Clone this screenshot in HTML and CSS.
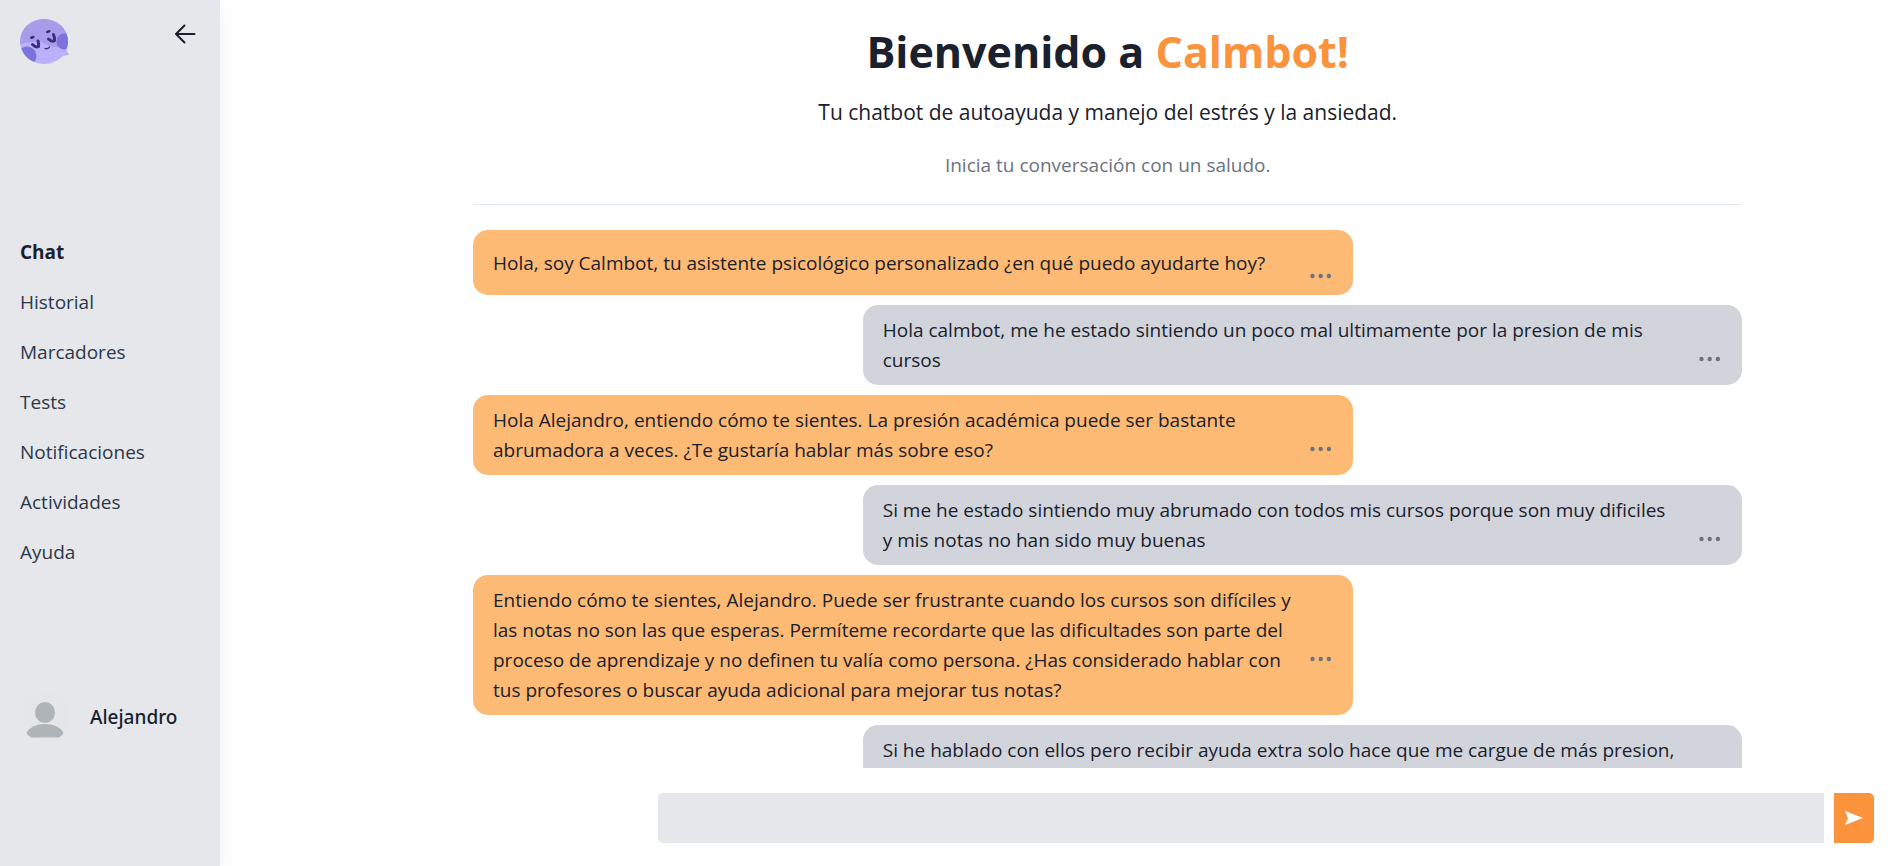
FILE: index.html
```html
<!DOCTYPE html>
<html lang="es">
<head>
<meta charset="utf-8">
<title>Calmbot</title>
<link rel="stylesheet" href="styles.css">
</head>
<body>
<svg class="sprite" aria-hidden="true">
  <symbol id="dots" viewBox="0 3 24 18">
    <circle cx="3.500" cy="12" r="2.200"/><circle cx="11.700" cy="12" r="2.200"/><circle cx="19.900" cy="12" r="2.200"/>
  </symbol>
</svg>
<aside class="sidebar">
  <div class="brand">
    <svg class="logo" viewBox="0 0 50 46" role="img" aria-label="Calmbot">
      <defs><clipPath id="face"><ellipse cx="24" cy="22.500" rx="24" ry="22.500"/></clipPath></defs>
      <path fill="#bbb0fb" d="M46 30 Q47 33.500 49.500 36 Q46 36 43 37 L36 42Z"/>
      <g clip-path="url(#face)">
        <rect width="50" height="46" fill="#bbb0fb"/>
        <path fill="#a89be8" d="M0 0H50V28L34 28Q27 27 22 23Q10 22 0 25Z"/>
        <circle cx="7" cy="37" r="9.500" fill="#7c72dc"/>
        <circle cx="44.500" cy="22.500" r="8" fill="#7c72dc"/>
      </g>
      <g fill="none" stroke="#3a2f80" stroke-linecap="round">
        <path stroke-width="3" d="M12.500 25.500Q16 29 18.500 27.500Q19 25 18 22M28.500 20Q32 23.500 34.500 21.500Q35 19 33.500 15.500"/>
        <path stroke-width="2.500" d="M11.300 18.700L13.300 18M27.300 13L29.300 12.200"/>
        <path stroke-width="1.300" d="M25 29.500Q28 30.500 29.500 28"/>
      </g>
    </svg>
    <button class="back" type="button" aria-label="Cerrar menú">
      <svg viewBox="0 0 24 24"><path d="M21.500 12H3M11.500 3.500L3 12L11.500 20.500"/></svg>
    </button>
  </div>
  <nav class="nav">
    <a class="active" href="#">Chat</a>
    <a href="#">Historial</a>
    <a href="#">Marcadores</a>
    <a href="#">Tests</a>
    <a href="#">Notificaciones</a>
    <a href="#">Actividades</a>
    <a href="#">Ayuda</a>
  </nav>
  <div class="user">
    <svg class="avatar" viewBox="0 0 50 50" aria-hidden="true">
      <circle cx="25" cy="25" r="25" fill="#e4e6e7"/>
      <ellipse cx="25" cy="20.500" rx="10" ry="10.500" fill="#aeb4b7"/>
      <path fill="#aeb4b7" d="M6.500 40.500Q12 32 25 32T43.500 40.500Q43 43 39 45.500H11Q7 43 6.500 40.500Z"/>
    </svg>
    <span>Alejandro</span>
  </div>
</aside>
<main class="main">
  <section class="chat">
    <header class="intro">
      <h1>Bienvenido a <span>Calmbot!</span></h1>
      <p class="lead">Tu chatbot de autoayuda y manejo del estrés y la ansiedad.</p>
      <p class="hint">Inicia tu conversación con un saludo.</p>
    </header>
    <div class="messages">
      <article class="msg bot"><p>Hola, soy Calmbot, tu asistente psicológico personalizado ¿en qué puedo ayudarte hoy?</p><button type="button" aria-label="Opciones"><svg><use href="#dots"/></svg></button></article>
      <article class="msg me"><p>Hola calmbot, me he estado sintiendo un poco mal ultimamente por la presion de mis cursos</p><button type="button" aria-label="Opciones"><svg><use href="#dots"/></svg></button></article>
      <article class="msg bot"><p>Hola Alejandro, entiendo cómo te sientes. La presión académica puede ser bastante abrumadora a veces. ¿Te gustaría hablar más sobre eso?</p><button type="button" aria-label="Opciones"><svg><use href="#dots"/></svg></button></article>
      <article class="msg me"><p>Si me he estado sintiendo muy abrumado con todos mis cursos porque son muy dificiles y&nbsp;mis notas no han sido muy buenas</p><button type="button" aria-label="Opciones"><svg><use href="#dots"/></svg></button></article>
      <article class="msg bot"><p>Entiendo cómo te sientes, Alejandro. Puede ser frustrante cuando los cursos son difíciles y las notas no son las que esperas. Permíteme recordarte que las dificultades son parte del proceso de aprendizaje y no definen tu valía como persona. ¿Has considerado hablar con tus profesores o buscar ayuda adicional para mejorar tus notas?</p><button type="button" aria-label="Opciones"><svg><use href="#dots"/></svg></button></article>
      <article class="msg me"><p>Si he hablado con ellos pero recibir ayuda extra solo hace que me cargue de más presion,<br>&nbsp;</p></article>
    </div>
  </section>
  <form class="composer">
    <input type="text" aria-label="Mensaje">
    <button type="submit" aria-label="Enviar"><svg viewBox="0 0 18 14"><path d="M0 0L18 7L0 14L3 7Z"/></svg></button>
  </form>
</main>
</body>
</html>
```
FILE: styles.css
```css
* { box-sizing: border-box; }
body {
  margin: 0;
  display: flex;
  height: 100vh;
  overflow: hidden;
  background: #fff;
  color: #1a202c;
  font: 19px/30px "Open Sans", "Noto Sans", sans-serif;
}
h1, p { margin: 0; }
button { border: 0; padding: 0; background: none; cursor: pointer; }
svg { display: block; }
.sprite { position: absolute; width: 0; height: 0; }

.sidebar {
  flex: 0 0 220px;
  display: flex;
  flex-direction: column;
  justify-content: space-between;
  padding: 19px 20px 124px;
  background: #e5e7eb;
  box-shadow: 0 10px 20px rgba(0, 0, 0, .06);
}
.brand { display: flex; justify-content: space-between; align-items: flex-start; }
.logo { width: 50px; height: 46px; }
.back { margin: 3px 3px 0 0; }
.back svg { width: 24px; height: 24px; fill: none; stroke: #1a202c; stroke-width: 2; stroke-linecap: round; stroke-linejoin: round; }
.nav { display: flex; flex-direction: column; gap: 20px; padding-top: 46px; }
.nav a { color: #2d3748; text-decoration: none; }
.nav .active { color: #1a202c; font-weight: 700; }
.user { display: flex; align-items: center; gap: 20px; font-family: "Noto Sans", "Open Sans", sans-serif; font-weight: 500; }
.avatar { width: 50px; height: 50px; }

.main { flex: 1; display: flex; flex-direction: column; min-width: 0; }
.chat { flex: 1; min-height: 0; overflow: hidden; padding: 20px 9% 0 253px; }
.intro { text-align: center; padding-bottom: 24px; border-bottom: 1px solid #e2e8f0; }
h1 { font-size: 43px; line-height: 64px; font-weight: 700; }
h1 span { color: #fb923c; }
.lead { margin-top: 10px; font-size: 21px; line-height: 36px; }
.hint { margin-top: 20px; color: #6b7280; }
.messages { display: flex; flex-direction: column; gap: 10px; padding-top: 25px; }
.msg {
  width: 69.3%;
  display: grid;
  grid-template-columns: 1fr 40px;
  align-items: center;
  padding: 10px 20px;
  border-radius: 15px;
}
.bot { background: #fdba74; }
.me { background: #d1d5db; align-self: flex-end; }
.msg button { padding: 27px 0 0; justify-self: end; }
.msg svg { width: 24px; height: 18px; fill: #6b7280; }

.composer { display: flex; gap: 10px; padding: 25px 19px 23px 438px; }
.composer input {
  flex: 1;
  min-width: 0;
  height: 50px;
  padding: 0 20px;
  border: 0;
  border-radius: 5px 0 0 5px;
  background: #e5e7eb;
  font: inherit;
}
.composer button { display: grid; place-items: center; width: 40px; background: #fb923c; border-radius: 0 5px 5px 0; }
.composer svg { width: 18px; height: 14px; fill: #fff; }
```
